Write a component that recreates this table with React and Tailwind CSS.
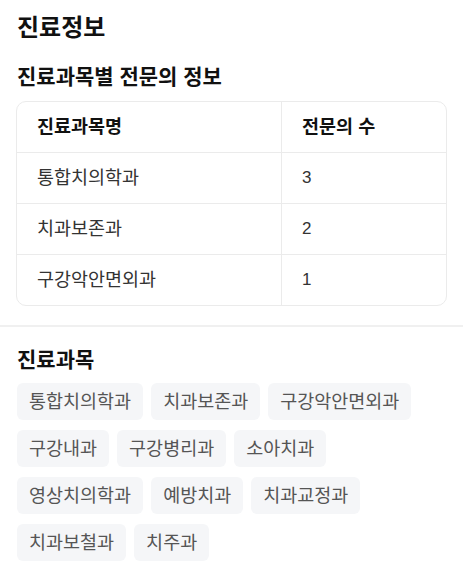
import React from "react";

const rows = [
  ["통합치의학과", "3"],
  ["치과보존과", "2"],
  ["구강악안면외과", "1"],
];

const tags = [
  "통합치의학과",
  "치과보존과",
  "구강악안면외과",
  "구강내과",
  "구강병리과",
  "소아치과",
  "영상치의학과",
  "예방치과",
  "치과교정과",
  "치과보철과",
  "치주과",
];

export default function App() {
  return (
    <div
      className="w-[463px] min-h-[571px] bg-white text-[#111]"
      style={{ fontFamily: '"Liberation Sans", "Noto Sans CJK KR", sans-serif' }}
    >
      <div className="px-4 pt-3 pb-[19px]">
        <h1 className="text-[24px] font-bold leading-[32px] pl-[1px]">진료정보</h1>
        <h2 className="mt-[19px] text-[21px] font-bold leading-[28px] pl-[1px]">진료과목별 전문의 정보</h2>
        <div className="mt-[10px] border border-[#ebebeb] rounded-[10px] overflow-hidden">
          <div className="grid grid-cols-[265px_1fr] h-[51px] border-b border-[#ebebeb]">
            <div className="flex items-center pl-5 border-r border-[#ebebeb] text-[18.5px] font-bold">진료과목명</div>
            <div className="flex items-center pl-5 text-[18.5px] font-bold">전문의 수</div>
          </div>
          {rows.map(([name, n], i) => (
            <div
              key={name}
              className={
                i < rows.length - 1
                  ? "grid grid-cols-[265px_1fr] h-[51px] border-b border-[#ebebeb]"
                  : "grid grid-cols-[265px_1fr] h-[50px]"
              }
            >
              <div className="flex items-center pl-5 border-r border-[#ebebeb] text-[18.5px] text-[#333]">{name}</div>
              <div className="flex items-center pl-5 text-[17px] text-[#333]">{n}</div>
            </div>
          ))}
        </div>
      </div>
      <div className="h-[2px] bg-[#f0f0f0]" />
      <div className="px-4 pt-[19px] pb-4">
        <h2 className="text-[21px] font-bold leading-[28px] pl-[1px]">진료과목</h2>
        <div className="mt-[9px] flex flex-wrap gap-x-2 gap-y-[10px] pl-[1px]">
          {tags.map((t) => (
            <span
              key={t}
              className="h-[37px] px-3 flex items-center rounded-md bg-[#f5f6f8] text-[18.5px] text-[#555]"
            >
              {t}
            </span>
          ))}
        </div>
      </div>
    </div>
  );
}
